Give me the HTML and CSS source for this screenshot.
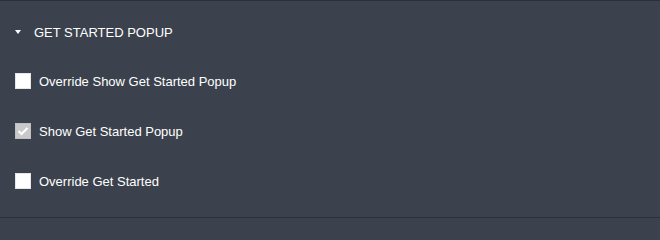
FILE: index.html
```html
<!DOCTYPE html>
<html>
<head>
<meta charset="utf-8">
<link rel="stylesheet" href="styles.css">
</head>
<body>
<div class="panel">
  <div class="header">
    <span class="caret"></span>
    <span class="title">GET STARTED POPUP</span>
  </div>
  <div class="row">
    <span class="box"></span>
    <span class="label">Override Show Get Started Popup</span>
  </div>
  <div class="row">
    <span class="box checked">
      <svg width="12" height="10" viewBox="0 0 12 10"><path d="M1.5 5 L4.5 8 L10.5 2" fill="none" stroke="#ffffff" stroke-width="2"/></svg>
    </span>
    <span class="label">Show Get Started Popup</span>
  </div>
  <div class="row">
    <span class="box"></span>
    <span class="label">Override Get Started</span>
  </div>
</div>
</body>
</html>
```
FILE: styles.css
```css
html, body {
  margin: 0;
  padding: 0;
  background: #3c424d;
}
.panel {
  width: 660px;
  height: 218px;
  box-sizing: border-box;
  background: #3c424d;
  border-top: 1px solid #2c3038;
  border-bottom: 1px solid #2c3038;
  font-family: "Liberation Sans", Arial, sans-serif;
  font-size: 13px;
  color: #ffffff;
}
.header {
  height: 48px;
  padding-top: 7px;
  display: flex;
  align-items: center;
  padding-left: 15px;
}
.caret {
  width: 0;
  height: 0;
  border-left: 3.5px solid transparent;
  border-right: 3.5px solid transparent;
  border-top: 4px solid #ffffff;
  margin-right: 13px;
}
.row {
  height: 50px;
  display: flex;
  align-items: center;
  padding-left: 15px;
}
.box {
  width: 16px;
  height: 16px;
  background: #ffffff;
  box-sizing: border-box;
  border: 1px solid #e6e6e6;
  margin-right: 8px;
  display: flex;
  align-items: center;
  justify-content: center;
}
.box.checked {
  background: #c9c9c9;
  border-color: #c0c0c0;
}
```
